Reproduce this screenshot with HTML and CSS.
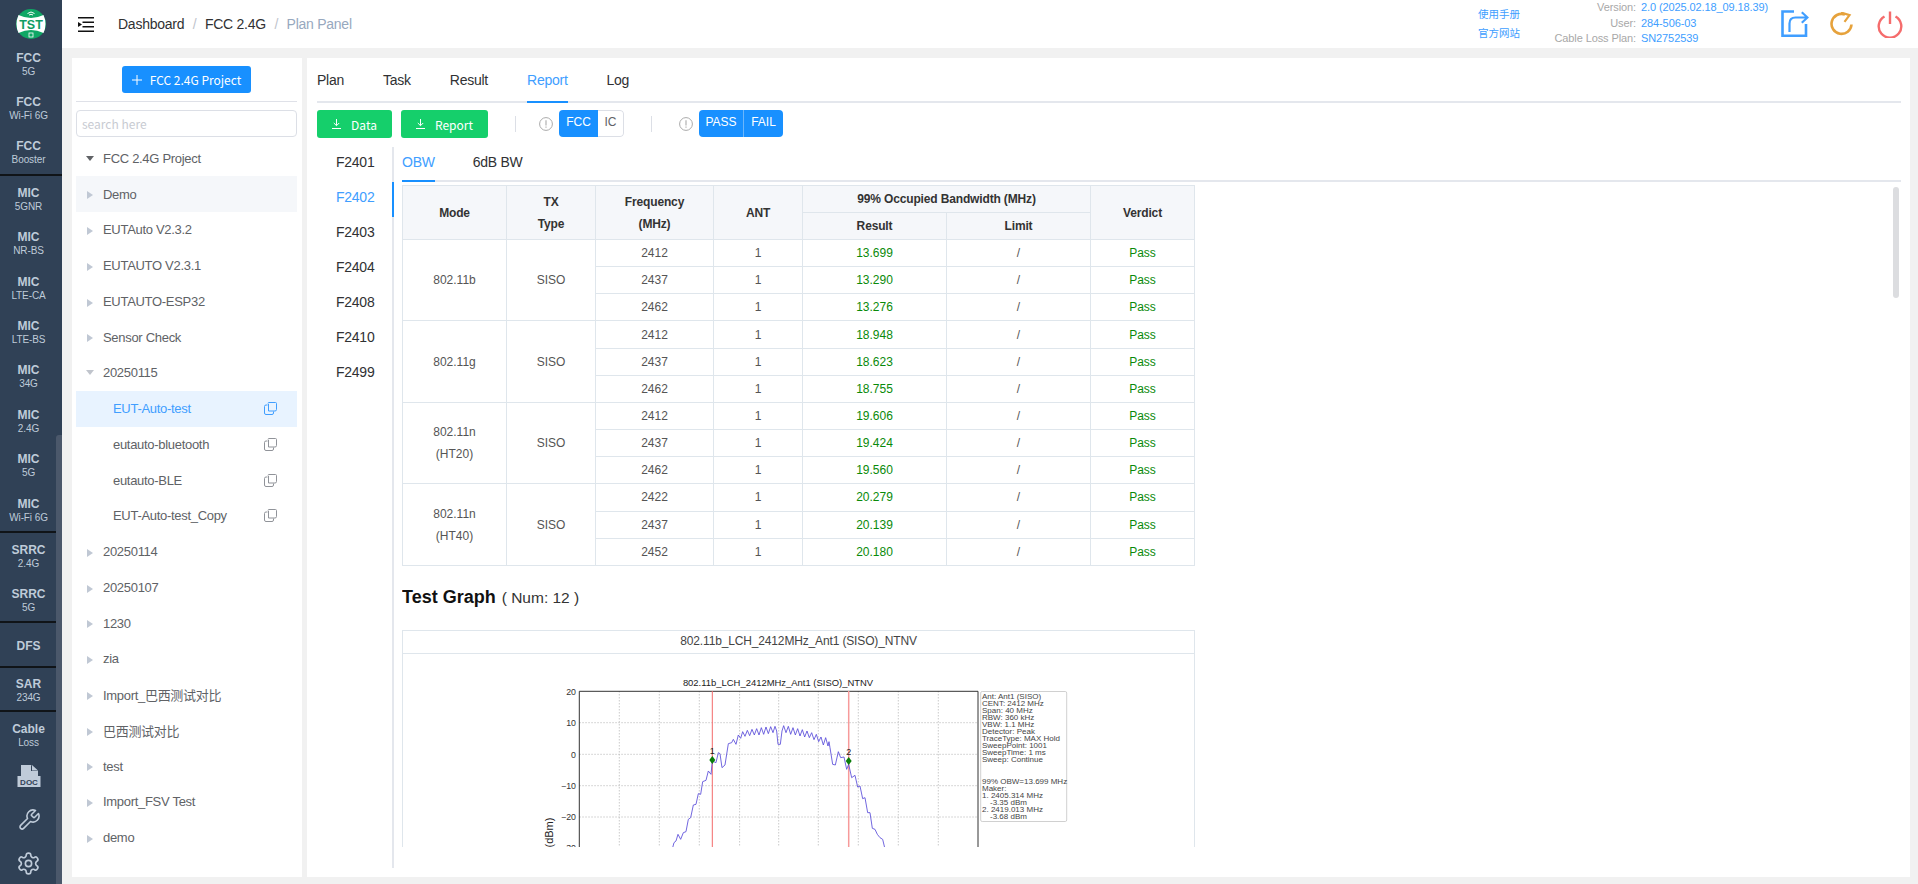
FILE: index.html
```html
<!DOCTYPE html>
<html lang="en">
<head>
<meta charset="utf-8">
<title>Plan Panel</title>
<link rel="stylesheet" href="styles.css">
</head>
<body>
<aside class="sidebar">
  <div class="logo">
    <svg width="32" height="32" viewBox="14 8 32 32">
      <circle cx="30" cy="24" r="15" fill="#0fa765"/>
      <path d="M17.500 15Q30 21 42.500 15Q46.500 24 42.500 33Q30 27 17.500 33Q13.500 24 17.500 15Z" fill="#fff"/>
      <path d="M26.500 13.500Q30 10.500 33.500 13.500M28 15Q30 13.500 32 15" fill="none" stroke="#fff" stroke-width="1"/>
      <rect x="28" y="33" width="4" height="4" fill="none" stroke="#fff" stroke-width=".8"/>
      <text x="30" y="28.500" class="logo-text">TST</text>
    </svg>
  </div>
  <div class="group">
    <div class="item"><b>FCC</b><span>5G</span></div>
    <div class="item"><b>FCC</b><span>Wi-Fi 6G</span></div>
    <div class="item"><b>FCC</b><span>Booster</span></div>
  </div>
  <div class="group">
    <div class="item"><b>MIC</b><span>5GNR</span></div>
    <div class="item"><b>MIC</b><span>NR-BS</span></div>
    <div class="item"><b>MIC</b><span>LTE-CA</span></div>
    <div class="item"><b>MIC</b><span>LTE-BS</span></div>
    <div class="item"><b>MIC</b><span>34G</span></div>
    <div class="item"><b>MIC</b><span>2.4G</span></div>
    <div class="item"><b>MIC</b><span>5G</span></div>
    <div class="item"><b>MIC</b><span>Wi-Fi 6G</span></div>
  </div>
  <div class="group">
    <div class="item short"><b>SRRC</b><span>2.4G</span></div>
    <div class="item short"><b>SRRC</b><span>5G</span></div>
  </div>
  <div class="group">
    <div class="item single"><b>DFS</b></div>
  </div>
  <div class="group">
    <div class="item single"><b>SAR</b><span>234G</span></div>
  </div>
  <div class="item"><b>Cable</b><span>Loss</span></div>
  <div class="icon-cell first">
    <svg width="24" height="22" viewBox="0 0 24 22">
      <path d="M4 0H14L21 6V11H4Z" fill="#bfcbd9"/>
      <path d="M14 0V6H21" fill="#304156"/>
      <path d="M15 0L21 5.500H15Z" fill="#bfcbd9"/>
      <rect x=".5" y="11" width="23" height="11" fill="#bfcbd9"/>
      <text x="12" y="20" class="doc-text">DOC</text>
    </svg>
  </div>
  <div class="icon-cell">
    <svg width="24" height="24" viewBox="0 0 24 24" class="side-stroke">
      <path d="M14.700 6.300a1 1 0 0 0 0 1.400l1.600 1.600a1 1 0 0 0 1.400 0l3.770-3.770a6 6 0 0 1-7.940 7.940l-6.910 6.910a2.120 2.120 0 0 1-3-3l6.910-6.910a6 6 0 0 1 7.940-7.940l-3.760 3.760z"/>
    </svg>
  </div>
  <div class="icon-cell">
    <svg width="25" height="25" viewBox="0 0 24 24" class="side-stroke">
      <path d="M12.220 2h-.44a2 2 0 0 0-2 2v.18a2 2 0 0 1-1 1.730l-.43.25a2 2 0 0 1-2 0l-.15-.08a2 2 0 0 0-2.730.73l-.22.38a2 2 0 0 0 .73 2.730l.15.1a2 2 0 0 1 1 1.720v.51a2 2 0 0 1-1 1.740l-.15.09a2 2 0 0 0-.73 2.730l.22.38a2 2 0 0 0 2.730.73l.15-.08a2 2 0 0 1 2 0l.43.25a2 2 0 0 1 1 1.730V20a2 2 0 0 0 2 2h.44a2 2 0 0 0 2-2v-.18a2 2 0 0 1 1-1.730l.43-.25a2 2 0 0 1 2 0l.15.08a2 2 0 0 0 2.730-.73l.22-.39a2 2 0 0 0-.73-2.730l-.15-.08a2 2 0 0 1-1-1.740v-.5a2 2 0 0 1 1-1.740l.15-.09a2 2 0 0 0 .73-2.730l-.22-.38a2 2 0 0 0-2.730-.73l-.15.08a2 2 0 0 1-2 0l-.43-.25a2 2 0 0 1-1-1.730V4a2 2 0 0 0-2-2z"/>
      <circle cx="12" cy="12" r="3"/>
    </svg>
  </div>
  <div class="side-scroll"></div>
</aside>

<div class="main">
  <header class="topbar">
    <svg class="hamburger" width="16" height="15" viewBox="0 0 16 15">
      <path d="M0 .75H16M4.500 5.250H16M4.500 9.750H16M0 14.250H16" stroke="#111" stroke-width="1.400" fill="none"/>
      <path d="M0 5L4 7.500L0 10Z" fill="#111"/>
    </svg>
    <nav class="crumbs">
      <span>Dashboard</span><i>/</i><span>FCC 2.4G</span><i>/</i><span class="crumb-last">Plan Panel</span>
    </nav>
    <div class="top-right">
      <div class="links"><a>使用手册</a><a>官方网站</a></div>
      <div class="info">
        <label>Version:</label><span>2.0 (2025.02.18_09.18.39)</span>
        <label>User:</label><span>284-506-03</span>
        <label>Cable Loss Plan:</label><span>SN2752539</span>
      </div>
      <svg class="share" width="28" height="28" viewBox="0 0 28 28" fill="none" stroke="#409eff" stroke-width="2.600">
        <path d="M13 1.500H1.500V25.700H25V14"/>
        <path d="M8.500 22V13.500Q8.500 7.500 14.500 7.500H26M20.800 2.300L26.500 7.500L20.800 12.700" stroke-width="2.200"/>
      </svg>
      <svg class="refresh" width="24" height="24" viewBox="0 0 24 24" fill="none" stroke="#e6a23c" stroke-width="2.600">
        <path d="M21.500 12.500A10 10 0 1 1 15 2.500"/>
        <path d="M11 .5L19.500 3.200L14.500 9.800" stroke-width="2.200"/>
      </svg>
      <svg class="power" width="26" height="27" viewBox="0 0 26 27" fill="none" stroke="#f56c6c" stroke-width="2.400">
        <path d="M7.500 5.500A11.300 11.300 0 1 0 18.500 5.500"/>
        <path d="M13 .5V13"/>
      </svg>
    </div>
  </header>

  <div class="content">
    <section class="left-panel">
      <div class="add-wrap">
        <button class="btn-add"><svg width="10" height="10" viewBox="0 0 10 10"><path d="M5 0V10M0 5H10" stroke="#fff" stroke-width="1"/></svg>FCC 2.4G Project</button>
      </div>
      <input class="search" type="text" placeholder="search here">
      <div class="tree">
        <div class="row"><i class="caret open dark"></i>FCC 2.4G Project</div>
        <div class="row hover"><i class="caret"></i>Demo</div>
        <div class="row"><i class="caret"></i>EUTAuto V2.3.2</div>
        <div class="row"><i class="caret"></i>EUTAUTO V2.3.1</div>
        <div class="row"><i class="caret"></i>EUTAUTO-ESP32</div>
        <div class="row"><i class="caret"></i>Sensor Check</div>
        <div class="row"><i class="caret open"></i>20250115</div>
        <div class="row child selected">EUT-Auto-test<svg class="copy" width="13" height="13" viewBox="0 0 13 13"><path d="M4 1.500Q4 .5 5 .5H11.500Q12.500 .5 12.500 1.500V7.500Q12.500 9 11 9H4.500V2"/><path d="M3.500 3H2Q.5 3 .5 4.500V11Q.5 12.500 2 12.500H8Q9.500 12.500 9.500 11V9.500"/></svg></div>
        <div class="row child">eutauto-bluetooth<svg class="copy" width="13" height="13" viewBox="0 0 13 13"><path d="M4 1.500Q4 .5 5 .5H11.500Q12.500 .5 12.500 1.500V7.500Q12.500 9 11 9H4.500V2"/><path d="M3.500 3H2Q.5 3 .5 4.500V11Q.5 12.500 2 12.500H8Q9.500 12.500 9.500 11V9.500"/></svg></div>
        <div class="row child">eutauto-BLE<svg class="copy" width="13" height="13" viewBox="0 0 13 13"><path d="M4 1.500Q4 .5 5 .5H11.500Q12.500 .5 12.500 1.500V7.500Q12.500 9 11 9H4.500V2"/><path d="M3.500 3H2Q.5 3 .5 4.500V11Q.5 12.500 2 12.500H8Q9.500 12.500 9.500 11V9.500"/></svg></div>
        <div class="row child">EUT-Auto-test_Copy<svg class="copy" width="13" height="13" viewBox="0 0 13 13"><path d="M4 1.500Q4 .5 5 .5H11.500Q12.500 .5 12.500 1.500V7.500Q12.500 9 11 9H4.500V2"/><path d="M3.500 3H2Q.5 3 .5 4.500V11Q.5 12.500 2 12.500H8Q9.500 12.500 9.500 11V9.500"/></svg></div>
        <div class="row"><i class="caret"></i>20250114</div>
        <div class="row"><i class="caret"></i>20250107</div>
        <div class="row"><i class="caret"></i>1230</div>
        <div class="row"><i class="caret"></i>zia</div>
        <div class="row"><i class="caret"></i>Import_巴西测试对比</div>
        <div class="row"><i class="caret"></i>巴西测试对比</div>
        <div class="row"><i class="caret"></i>test</div>
        <div class="row"><i class="caret"></i>Import_FSV Test</div>
        <div class="row"><i class="caret"></i>demo</div>
      </div>
    </section>

    <section class="right-panel">
      <div class="tabs">
        <span class="tab">Plan</span><span class="tab">Task</span><span class="tab">Result</span><span class="tab active">Report</span><span class="tab">Log</span>
      </div>
      <div class="toolbar">
        <button class="btn-green data"><svg width="9" height="10" viewBox="0 0 9 10"><path d="M4.500 0V6.500M1.800 4L4.500 6.700L7.200 4M0 9.500H9" stroke="#fff" stroke-width="1" fill="none"/></svg>Data</button>
        <button class="btn-green report"><svg width="9" height="10" viewBox="0 0 9 10"><path d="M4.500 0V6.500M1.800 4L4.500 6.700L7.200 4M0 9.500H9" stroke="#fff" stroke-width="1" fill="none"/></svg>Report</button>
        <i class="vline"></i>
        <svg class="tip" width="14" height="14" viewBox="0 0 14 14"><circle cx="7" cy="7" r="6.400" fill="none" stroke="#aaa" stroke-width="1"/><path d="M7 3.200V8.400M7 9.600V10.800" stroke="#aaa" stroke-width="1.100"/></svg>
        <div class="seg"><span class="on">FCC</span><span class="off">IC</span></div>
        <i class="vline"></i>
        <svg class="tip tip2" width="14" height="14" viewBox="0 0 14 14"><circle cx="7" cy="7" r="6.400" fill="none" stroke="#aaa" stroke-width="1"/><path d="M7 3.200V8.400M7 9.600V10.800" stroke="#aaa" stroke-width="1.100"/></svg>
        <div class="seg"><span class="on pass">PASS</span><span class="on fail">FAIL</span></div>
      </div>
      <div class="body">
        <div class="vtabs">
          <div class="vtab">F2401</div>
          <div class="vtab active">F2402</div>
          <div class="vtab">F2403</div>
          <div class="vtab">F2404</div>
          <div class="vtab">F2408</div>
          <div class="vtab">F2410</div>
          <div class="vtab">F2499</div>
        </div>
        <div class="pane">
          <div class="subtabs"><span class="subtab active">OBW</span><span class="subtab">6dB BW</span></div>
          <div class="scroll">
            <table class="data-table">
              <colgroup><col class="c-mode"><col class="c-tx"><col class="c-freq"><col class="c-ant"><col class="c-res"><col class="c-lim"><col class="c-ver"></colgroup>
              <thead>
                <tr><th rowspan="2">Mode</th><th rowspan="2">TX<br>Type</th><th rowspan="2">Frequency<br>(MHz)</th><th rowspan="2">ANT</th><th colspan="2">99% Occupied Bandwidth (MHz)</th><th rowspan="2">Verdict</th></tr>
                <tr><th>Result</th><th>Limit</th></tr>
              </thead>
              <tbody>
                <tr><td rowspan="3">802.11b</td><td rowspan="3">SISO</td><td>2412</td><td>1</td><td class="ok">13.699</td><td>/</td><td class="ok">Pass</td></tr>
                <tr><td>2437</td><td>1</td><td class="ok">13.290</td><td>/</td><td class="ok">Pass</td></tr>
                <tr><td>2462</td><td>1</td><td class="ok">13.276</td><td>/</td><td class="ok">Pass</td></tr>
                <tr><td rowspan="3">802.11g</td><td rowspan="3">SISO</td><td>2412</td><td>1</td><td class="ok">18.948</td><td>/</td><td class="ok">Pass</td></tr>
                <tr><td>2437</td><td>1</td><td class="ok">18.623</td><td>/</td><td class="ok">Pass</td></tr>
                <tr><td>2462</td><td>1</td><td class="ok">18.755</td><td>/</td><td class="ok">Pass</td></tr>
                <tr><td rowspan="3">802.11n<br>(HT20)</td><td rowspan="3">SISO</td><td>2412</td><td>1</td><td class="ok">19.606</td><td>/</td><td class="ok">Pass</td></tr>
                <tr><td>2437</td><td>1</td><td class="ok">19.424</td><td>/</td><td class="ok">Pass</td></tr>
                <tr><td>2462</td><td>1</td><td class="ok">19.560</td><td>/</td><td class="ok">Pass</td></tr>
                <tr><td rowspan="3">802.11n<br>(HT40)</td><td rowspan="3">SISO</td><td>2422</td><td>1</td><td class="ok">20.279</td><td>/</td><td class="ok">Pass</td></tr>
                <tr><td>2437</td><td>1</td><td class="ok">20.139</td><td>/</td><td class="ok">Pass</td></tr>
                <tr><td>2452</td><td>1</td><td class="ok">20.180</td><td>/</td><td class="ok">Pass</td></tr>
              </tbody>
            </table>
            <h3 class="graph-head">Test Graph <small>( Num: 12 )</small></h3>
            <div class="graph">
              <div class="graph-title">802.11b_LCH_2412MHz_Ant1 (SISO)_NTNV</div>
              <svg class="chart" width="791" height="194" viewBox="403 653 791 194">
                <text x="778" y="685" class="c-title">802.11b_LCH_2412MHz_Ant1 (SISO)_NTNV</text>
                <g class="grid">
                  <path d="M579.300 721.700H978M579.300 753.300H978M579.300 784.700H978M579.300 816H978"/>
                  <path d="M619.300 690V847M659.300 690V847M699.300 690V847M739.600 690V847M778.700 690V847M818.300 690V847M858.300 690V847M898.300 690V847M938.300 690V847"/>
                </g>
                <path d="M579.300 847V690.300H978V847" class="frame"/>
                <g class="ticks">
                  <text x="576" y="693.500">20</text>
                  <text x="576" y="725">10</text>
                  <text x="576" y="756.500">0</text>
                  <text x="576" y="788">−10</text>
                  <text x="576" y="819.300">−20</text>
                  <text x="576" y="850.300">−30</text>
                </g>
                <text class="ylabel" transform="translate(553 846.500) rotate(-90)">(dBm)</text>
                <path d="M712.300 690V847" class="marker-line"/>
                <path d="M848.700 690V847" class="marker-line wide"/>
                <g transform="translate(400 620) scale(.33333)">
                  <polyline class="trace" points="818,680 822,665 828,660 834,640 842,655 850,635 858,632 865,595 872,590 880,552 888,550 895,518 902,520 908,482 918,478 925,450 933,460 937,420 948,425 955,395 960,398 966,440 975,432 985,368 995,365 1000,355 1008,370 1015,342 1022,352 1028,332 1035,346 1042,328 1049,344 1056,325 1063,342 1070,323 1077,342 1084,320 1091,340 1098,318 1105,338 1112,317 1119,335 1125,316 1130,330 1134,370 1141,370 1146,330 1151,314 1158,335 1165,316 1172,340 1179,320 1186,342 1193,323 1200,345 1207,326 1214,348 1221,330 1228,350 1235,335 1242,356 1249,340 1256,362 1263,348 1270,372 1277,350 1284,375 1287,362 1290,380 1298,430 1306,432 1315,392 1322,410 1332,408 1340,445 1346,430 1355,470 1365,463 1373,498 1380,495 1388,533 1395,530 1403,575 1410,575 1417,622 1425,625 1432,640 1440,650 1448,655 1454,680"/>
                </g>
                <path d="M712.300 755L715.300 759L712.300 763L709.300 759Z" class="dot"/>
                <path d="M848.700 756L851.700 760L848.700 764L845.700 760Z" class="dot"/>
                <text x="712.300" y="753" class="mark-num">1</text>
                <text x="848.700" y="754" class="mark-num">2</text>
                <rect x="980.700" y="690.500" width="86" height="130" rx="1.500" class="legend-box"/>
                <g class="legend">
                  <text x="982" y="698">Ant: Ant1 (SISO)</text>
                  <text x="982" y="705">CENT: 2412 MHz</text>
                  <text x="982" y="712">Span: 40 MHz</text>
                  <text x="982" y="719">RBW: 360 kHz</text>
                  <text x="982" y="726">VBW: 1.1 MHz</text>
                  <text x="982" y="733">Detector: Peak</text>
                  <text x="982" y="740">TraceType: MAX Hold</text>
                  <text x="982" y="747">SweepPoint: 1001</text>
                  <text x="982" y="754">SweepTime: 1 ms</text>
                  <text x="982" y="761">Sweep: Continue</text>
                  <text x="982" y="783">99% OBW=13.699 MHz</text>
                  <text x="982" y="790">Maker:</text>
                  <text x="982" y="797">1. 2405.314 MHz</text>
                  <text x="990" y="804">-3.35 dBm</text>
                  <text x="982" y="811">2. 2419.013 MHz</text>
                  <text x="990" y="818">-3.68 dBm</text>
                </g>
              </svg>
            </div>
          </div>
          <div class="pane-scroll"></div>
        </div>
      </div>
    </section>
  </div>
</div>
</body>
</html>
```
FILE: styles.css
```css
* { box-sizing: border-box; }
html, body { margin: 0; height: 884px; overflow: hidden; }
body {
  display: flex;
  background: #f1f1f1;
  font-family: "Liberation Sans", "Noto Sans CJK SC", sans-serif;
  color: #303133;
}
button { border: 0; padding: 0; font-family: inherit; }

/* sidebar */
.sidebar { position: relative; width: 62px; height: 884px; flex: none; background: #304156; overflow: hidden; color: #bfcbd9; }
.logo { height: 41px; display: flex; justify-content: center; padding-top: 8px; }
.logo-text { font: bold 12.500px "Liberation Sans", sans-serif; fill: #0f9d63; text-anchor: middle; }
.group { border-bottom: 2px solid #101418; }
.item { height: 44.400px; padding: 3px 5px 0 0; display: flex; flex-direction: column; align-items: center; justify-content: center; text-align: center; }
.item.short { height: 44px; }
.item.single { height: 42.500px; }
.item b { font-size: 12px; line-height: 13px; }
.item span { font-size: 10px; line-height: 13px; letter-spacing: -.1px; white-space: nowrap; }
.icon-cell { height: 44px; padding-right: 5px; display: flex; align-items: center; justify-content: center; }
.icon-cell.first { margin-top: -3px; }
.side-stroke { fill: none; stroke: #bfcbd9; stroke-width: 1.600; stroke-linecap: round; stroke-linejoin: round; }
.doc-text { font: bold 8px "Liberation Sans", sans-serif; fill: #304156; text-anchor: middle; }
.side-scroll { position: absolute; right: 0; top: 435px; bottom: 0; width: 6px; border-radius: 3px 0 0 0; background: #4b586b; }

/* top bar */
.main { flex: 1; min-width: 0; display: flex; flex-direction: column; }
.topbar { height: 48px; flex: none; background: #fff; display: flex; align-items: center; padding: 0 15px 0 16px; }
.hamburger { flex: none; }
.crumbs { margin-left: 24px; font-size: 14px; letter-spacing: -.25px; display: flex; }
.crumbs i { font-style: normal; color: #c0c4cc; margin: 0 8.500px; }
.crumb-last { color: #97a8be; }
.top-right { margin-left: auto; display: flex; align-items: center; }
.links { display: flex; flex-direction: column; gap: 6px; font-size: 10.500px; line-height: 13px; color: #409eff; }
.info { margin-left: 36px; display: grid; grid-template-columns: 80px 125px; column-gap: 5px; font-size: 11px; line-height: 15.500px; letter-spacing: -.1px; white-space: nowrap; margin-top: -1px; }
.info label { display: flex; justify-content: flex-end; color: #a8a8a8; }
.info span { color: #409eff; }
.share { margin-left: 15px; }
.refresh { margin-left: 21px; }
.power { margin-left: 23px; }

/* content */
.content { flex: 1; min-height: 0; display: flex; gap: 5px; padding: 10px 8px 7px 10px; }
.left-panel { width: 230px; flex: none; background: #fff; padding: 0 5px 0 4px; }
.add-wrap { padding-top: 8px; height: 44px; border-bottom: 1px solid #dfe1e8; display: flex; justify-content: center; }
.btn-add { width: 129px; height: 27px; border-radius: 3px; background: #1890ff; color: #fff; font: 12px "Noto Sans CJK SC", sans-serif; display: flex; align-items: center; justify-content: center; gap: 8px; }
.search { display: block; width: 100%; height: 27px; margin-top: 8px; border: 1px solid #dcdfe6; border-radius: 4px; padding: 0 5px; font: 12px "Noto Sans CJK SC", sans-serif; outline: none; }
.search::placeholder { color: #c8cbd2; }
.tree { margin-top: 3.500px; font-size: 13px; letter-spacing: -.3px; color: #606266; }
.row { position: relative; height: 35.750px; display: flex; align-items: center; padding-left: 27px; }
.row.hover { background: #f5f7fa; }
.row.child { padding-left: 37px; }
.row.selected { background: #e8f3ff; color: #409eff; }
.caret { position: absolute; left: 11px; top: 15px; border-style: solid; border-width: 4px 0 4px 6px; border-color: transparent transparent transparent #c0c8d4; }
.caret.open { left: 10px; top: 15px; border-width: 5px 4px 0 4px; border-color: #c0c4cc transparent transparent transparent; }
.caret.open.dark { border-top-color: #606266; top: 15px; }
.copy { margin-left: auto; margin-right: 20px; fill: none; stroke: #909399; stroke-width: 1; }
.selected .copy { stroke: #409eff; }

/* right panel */
.right-panel { flex: 1; min-width: 0; background: #fff; padding: 0 9px 0 10px; }
.tabs { height: 45px; border-bottom: 2px solid #e4e7ed; display: flex; font-size: 14px; letter-spacing: -.25px; }
.tab { height: 45px; line-height: 45px; margin-right: 39px; }
.tab.active { color: #409eff; border-bottom: 2px solid #1890ff; }
.toolbar { margin-top: 7px; height: 28px; display: flex; align-items: flex-start; }
.btn-green { height: 28px; border-radius: 3px; background: #15cf6b; color: #fff; font: 12px "Noto Sans CJK SC", sans-serif; display: flex; align-items: center; justify-content: center; gap: 10px; }
.btn-green.data { width: 75px; }
.btn-green.report { width: 87px; margin-left: 9px; }
.vline { width: 1px; height: 16px; margin: 6px 0 0 27px; background: #dcdfe6; }
.tip { margin: 7px 6px 0 23px; flex: none; }
.tip2 { margin-left: 27px; }
.seg { display: flex; height: 27px; font-size: 12px; line-height: 24px; border-radius: 4px; overflow: hidden; }
.seg span { display: block; text-align: center; }
.seg .on { width: 39px; background: #1890ff; color: #fff; }
.seg .off { border: 1px solid #dcdfe6; border-left: 0; border-radius: 0 4px 4px 0; color: #606266; width: 26px; line-height: 22px; }
.seg .on.pass { width: 45px; border-right: 1px solid #6cb6fb; }

.body { margin-top: 9px; display: flex; }
.vtabs { width: 77px; height: 721px; flex: none; border-right: 2px solid #e4e7ed; font-size: 14px; letter-spacing: -.25px; }
.vtab { position: relative; height: 35px; margin-right: -2px; padding-left: 19px; line-height: 30px; }
.vtab.active { color: #409eff; border-right: 2px solid #1890ff; }
.pane { position: relative; flex: 1; min-width: 0; padding-left: 8px; }
.subtabs { height: 35px; border-bottom: 2px solid #e4e7ed; display: flex; font-size: 14px; letter-spacing: -.25px; }
.subtab { height: 35px; line-height: 30px; margin-right: 38px; }
.subtab.active { color: #409eff; border-bottom: 2px solid #1890ff; }
.scroll { margin-top: 3px; height: 662px; overflow: hidden; }
.pane-scroll { position: absolute; right: 2px; top: 40px; width: 6px; height: 111px; border-radius: 3px; background: #dcdde0; }

.data-table { width: 792px; table-layout: fixed; border-collapse: collapse; font-size: 12px; line-height: 22px; color: #555; text-align: center; }
.c-mode { width: 104px; } .c-tx { width: 89px; } .c-freq { width: 118px; } .c-ant { width: 89px; }
.c-res { width: 144px; } .c-lim { width: 144px; } .c-ver { width: 104px; }
.data-table th, .data-table td { border: 1px solid #dfe6ec; padding: 0; height: 27.170px; }
.data-table th { background: #f5f7fa; color: #333; font-weight: bold; height: 27px; letter-spacing: -.15px; }
.data-table .ok { color: #0a8a0a; }

.graph-head { margin: 19px 0 21px; height: 24px; font-size: 18px; line-height: 24px; color: #111; font-weight: bold; }
.graph-head small { font-size: 15.500px; font-weight: normal; color: #333; margin-left: 1px; }
.graph { width: 793px; border: 1px solid #dfe6ec; }
.graph-title { height: 23px; border-bottom: 1px solid #dfe6ec; text-align: center; font-size: 12px; line-height: 21px; letter-spacing: -.15px; color: #444; }
.chart { display: block; }
.chart text { font-family: "Liberation Sans", sans-serif; }
.c-title { font-size: 9.450px; text-anchor: middle; fill: #222; }
.grid path { fill: none; stroke: #bdbdbd; stroke-width: .8; stroke-dasharray: 1.500 1.500; }
.frame { fill: none; stroke: #333; stroke-width: 1; }
.ticks text { font-size: 8.800px; text-anchor: end; fill: #333; }
.ylabel { font-size: 11px; fill: #222; }
.marker-line { fill: none; stroke: #f36a6a; stroke-width: 1; }
.marker-line.wide { stroke: #f79a9a; stroke-width: 1.500; }
.trace { fill: none; stroke: #5548d8; stroke-width: 2.500; }
.dot { fill: #0a7d0a; }
.mark-num { font-size: 9px; text-anchor: middle; fill: #222; }
.legend-box { fill: #fff; stroke: #d0d0d0; stroke-width: 1; }
.legend text { font-size: 8px; fill: #444; }
```
